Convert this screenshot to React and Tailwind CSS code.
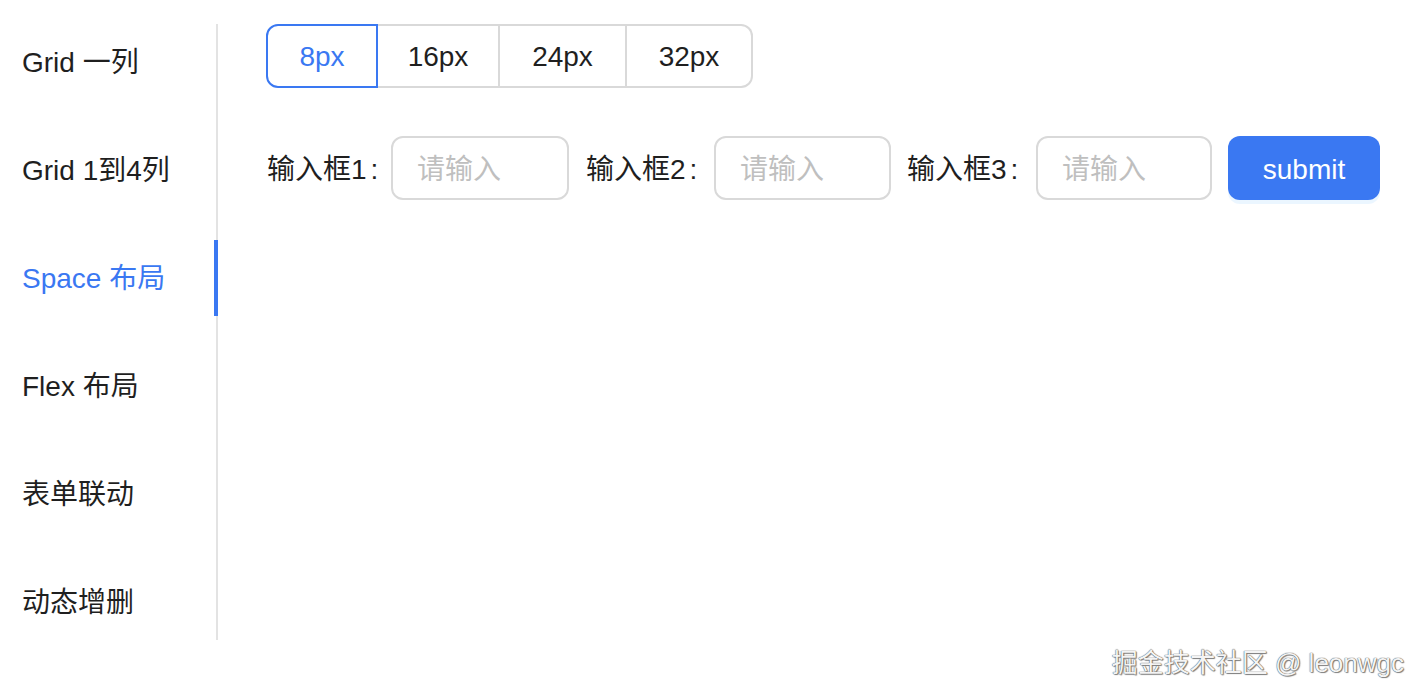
import React from "react";

const font = { fontFamily: '"Liberation Sans", "Noto Sans CJK SC", sans-serif' };

const tabs = ["Grid 一列", "Grid 1到4列", "Space 布局", "Flex 布局", "表单联动", "动态增删"];

export default function App() {
  return (
    <div
      className="relative min-h-[700px] w-[1424px] bg-white pt-[24px] text-[28px] leading-[44px] text-[#1f1f1f]"
      style={font}
    >
      <div className="flex">
        <div className="flex w-[218px] shrink-0 flex-col gap-[32px] border-r-2 border-[#e3e3e3]">
          {tabs.map((t, i) => (
            <div
              key={t}
              className={
                i === 2
                  ? "relative flex h-[76px] items-center pl-[22px] pt-[2px] text-[#3a78f2]"
                  : "relative flex h-[76px] items-center pl-[22px] pt-[2px]"
              }
            >
              <span className="whitespace-nowrap">{t}</span>
              {i === 2 && (
                <span className="absolute right-[-2px] top-0 h-[76px] w-[4px] bg-[#3a78f2]" />
              )}
            </div>
          ))}
        </div>

        <div className="flex flex-col pl-[48px]">
          <div className="flex h-[64px]">
            <div className="z-10 flex w-[112px] items-center justify-center rounded-l-[12px] border-2 border-[#3a78f2] pt-[2px] text-[#3a78f2]">
              8px
            </div>
            <div className="flex w-[122px] items-center justify-center border-y-2 border-r-2 border-[#d9d9d9] pt-[2px]">
              16px
            </div>
            <div className="flex w-[127px] items-center justify-center border-y-2 border-r-2 border-[#d9d9d9] pt-[2px]">
              24px
            </div>
            <div className="flex w-[126px] items-center justify-center rounded-r-[12px] border-y-2 border-r-2 border-[#d9d9d9] pt-[2px]">
              32px
            </div>
          </div>

          <div className="mt-[48px] flex h-[64px] items-center">
            <div className="w-[109px] whitespace-nowrap pl-[1px] pt-[3px]">
              输入框1<span className="ml-[4px]">:</span>
            </div>
            <div className="ml-[16px] flex h-[64px] w-[178px] items-center rounded-[12px] border-2 border-[#d9d9d9] px-[24px] pt-[3px] text-[#bfbfbf]">
              请输入
            </div>
            <div className="ml-[17px] w-[112px] whitespace-nowrap pt-[3px]">
              输入框2<span className="ml-[4px]">:</span>
            </div>
            <div className="ml-[16px] flex h-[64px] w-[177px] items-center rounded-[12px] border-2 border-[#d9d9d9] px-[24px] pt-[3px] text-[#bfbfbf]">
              请输入
            </div>
            <div className="ml-[16px] w-[113px] whitespace-nowrap pt-[3px]">
              输入框3<span className="ml-[4px]">:</span>
            </div>
            <div className="ml-[16px] flex h-[64px] w-[176px] items-center rounded-[12px] border-2 border-[#d9d9d9] px-[24px] pt-[3px] text-[#bfbfbf]">
              请输入
            </div>
            <div className="ml-[16px] flex h-[64px] w-[152px] items-center justify-center rounded-[12px] bg-[#3a78f2] pt-[3px] text-white shadow-[0_4px_0_rgba(5,145,255,0.08)]">
              submit
            </div>
          </div>
        </div>
      </div>

      <div
        className="absolute right-[20px] top-[645px] whitespace-nowrap text-[26px] leading-[36px] text-[#f4f4f4]"
        style={{ textShadow: "0 0 1px #555, 0 0 1px #555, 1px 1px 1px #888" }}
      >
        掘金技术社区 @ leonwgc
      </div>
    </div>
  );
}
